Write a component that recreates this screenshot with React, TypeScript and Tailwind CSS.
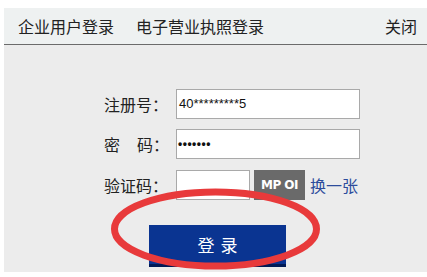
import React from 'react';

const cjk = { fontFamily: '"Noto Sans CJK SC", "Liberation Sans", sans-serif' };

const App = () => {
  return (
    <div className="w-[427px] h-[277px] bg-white pt-[8px] pl-[4px] overflow-hidden" style={cjk}>
      <div className="relative bg-[#ececec] h-[264px]">
        {/* Header tabs */}
        <div className="h-[37px] bg-[#eef1f1] border-b border-[#6b6b6b] flex items-center text-[16px] text-[#222] pl-[14px] pr-[10px]">
          <span>企业用户登录</span>
          <span className="ml-[22px]">电子营业执照登录</span>
          <span className="ml-auto">关闭</span>
        </div>

        {/* Form */}
        <div className="pl-[100px] pt-[44px] flex flex-col text-[16px] text-[#222]">
          <div className="flex items-center h-[30px]">
            <span className="w-[72px]">注册号：</span>
            <div className="w-[184px] h-[30px] bg-white border border-[#a9a9a9] flex items-center pl-[2px] text-[13px] text-[#111]" style={{ fontFamily: '"Liberation Sans", sans-serif' }}>
              40*********5
            </div>
          </div>
          <div className="flex items-center h-[30px] mt-[10px]">
            <span className="w-[72px] flex">
              <span>密</span>
              <span className="ml-[17px]">码：</span>
            </span>
            <div className="w-[184px] h-[30px] bg-white border border-[#a9a9a9] flex items-center pl-[1px] text-[12px] font-bold text-[#111] tracking-[0.5px]" style={{ fontFamily: '"Liberation Sans", sans-serif' }}>
              •••••••
            </div>
          </div>
          <div className="flex items-center h-[30px] mt-[11px]">
            <span className="w-[72px]">验证码：</span>
            <div className="w-[74px] h-[30px] bg-white border border-[#a9a9a9]" />
            <div className="ml-[4px] w-[51px] h-[30px] bg-[#6a6a6a] flex items-center justify-center text-white text-[12px] font-bold tracking-[-0.5px]" style={{ fontFamily: '"DejaVu Sans", sans-serif' }}>
              MP OI
            </div>
            <span className="ml-[5px] text-[#2d4c9c]">换一张</span>
          </div>
          <div className="mt-[25px] ml-[45px] w-[137px] h-[42px] bg-[#0a3491] border-b-[3px] border-[#021a55] flex items-center justify-center text-white text-[17px] tracking-[6px] pl-[6px]">
            登录
          </div>
        </div>

        {/* Red annotation ellipse */}
        <svg className="absolute left-0 top-0 pointer-events-none" width="423" height="264">
          <ellipse cx="211.5" cy="221" rx="101" ry="37" fill="none" stroke="#e83a3b" strokeWidth="7" />
        </svg>
      </div>
    </div>
  );
};

export default App;
